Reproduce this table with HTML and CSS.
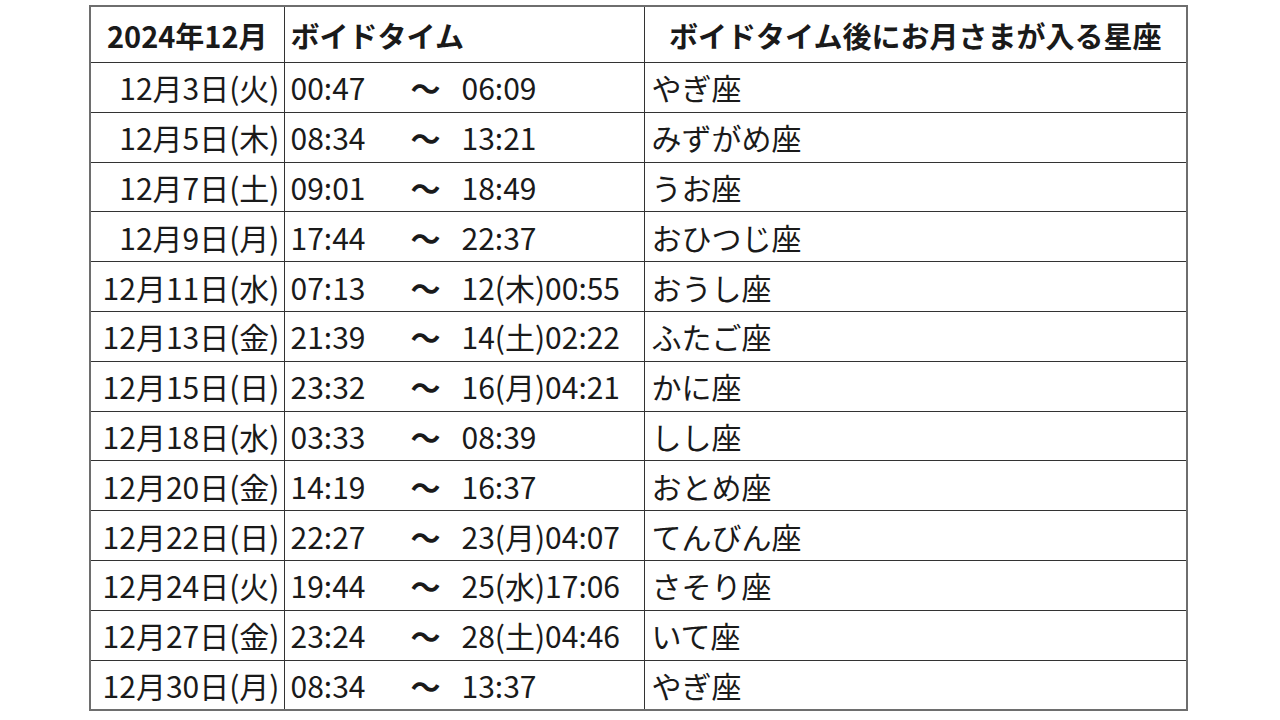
FILE: index.html
```
<!DOCTYPE html>
<html lang="ja">
<head>
<meta charset="utf-8">
<title>2024年12月 ボイドタイム</title>
<link rel="stylesheet" href="styles.css">
</head>
<body>
<table class="void">
  <colgroup>
    <col class="col-date">
    <col class="col-time">
    <col class="col-sign">
  </colgroup>
  <thead>
    <tr class="head">
      <th class="c-date">2024年12月</th>
      <th class="c-time">ボイドタイム</th>
      <th class="c-sign">ボイドタイム後にお月さまが入る星座</th>
    </tr>
  </thead>
  <tbody>
    <tr><td class="c-date">12月3日(火)</td><td class="c-time"><span class="t-start">00:47</span><span class="t-tilde">～</span><span class="t-end">06:09</span></td><td class="c-sign">やぎ座</td></tr>
    <tr><td class="c-date">12月5日(木)</td><td class="c-time"><span class="t-start">08:34</span><span class="t-tilde">～</span><span class="t-end">13:21</span></td><td class="c-sign">みずがめ座</td></tr>
    <tr><td class="c-date">12月7日(土)</td><td class="c-time"><span class="t-start">09:01</span><span class="t-tilde">～</span><span class="t-end">18:49</span></td><td class="c-sign">うお座</td></tr>
    <tr><td class="c-date">12月9日(月)</td><td class="c-time"><span class="t-start">17:44</span><span class="t-tilde">～</span><span class="t-end">22:37</span></td><td class="c-sign">おひつじ座</td></tr>
    <tr><td class="c-date">12月11日(水)</td><td class="c-time"><span class="t-start">07:13</span><span class="t-tilde">～</span><span class="t-end">12(木)00:55</span></td><td class="c-sign">おうし座</td></tr>
    <tr><td class="c-date">12月13日(金)</td><td class="c-time"><span class="t-start">21:39</span><span class="t-tilde">～</span><span class="t-end">14(土)02:22</span></td><td class="c-sign">ふたご座</td></tr>
    <tr><td class="c-date">12月15日(日)</td><td class="c-time"><span class="t-start">23:32</span><span class="t-tilde">～</span><span class="t-end">16(月)04:21</span></td><td class="c-sign">かに座</td></tr>
    <tr><td class="c-date">12月18日(水)</td><td class="c-time"><span class="t-start">03:33</span><span class="t-tilde">～</span><span class="t-end">08:39</span></td><td class="c-sign">しし座</td></tr>
    <tr><td class="c-date">12月20日(金)</td><td class="c-time"><span class="t-start">14:19</span><span class="t-tilde">～</span><span class="t-end">16:37</span></td><td class="c-sign">おとめ座</td></tr>
    <tr><td class="c-date">12月22日(日)</td><td class="c-time"><span class="t-start">22:27</span><span class="t-tilde">～</span><span class="t-end">23(月)04:07</span></td><td class="c-sign">てんびん座</td></tr>
    <tr><td class="c-date">12月24日(火)</td><td class="c-time"><span class="t-start">19:44</span><span class="t-tilde">～</span><span class="t-end">25(水)17:06</span></td><td class="c-sign">さそり座</td></tr>
    <tr><td class="c-date">12月27日(金)</td><td class="c-time"><span class="t-start">23:24</span><span class="t-tilde">～</span><span class="t-end">28(土)04:46</span></td><td class="c-sign">いて座</td></tr>
    <tr><td class="c-date">12月30日(月)</td><td class="c-time"><span class="t-start">08:34</span><span class="t-tilde">～</span><span class="t-end">13:37</span></td><td class="c-sign">やぎ座</td></tr>
  </tbody>
</table>
</body>
</html>
```
FILE: styles.css
```
html, body {
  margin: 0;
  padding: 0;
  background: #ffffff;
}

body {
  font-family: "Noto Sans CJK JP", "Noto Sans", sans-serif;
  color: #1a1a1a;
}

.void {
  margin: 5px 0 0 89px;
  width: 1099px;
  border-collapse: collapse;
  border: 2px solid #6e6e6e;
  table-layout: fixed;
}

.col-date {
  width: 194px;
}

.col-time {
  width: 360px;
}

.void th,
.void td {
  border: 1px solid #333333;
  padding: 0;
  vertical-align: middle;
  white-space: nowrap;
  line-height: 1;
}

.head th {
  height: 53px;
  font-size: 29px;
  font-weight: 700;
  padding-top: 2px;
}

.void td {
  height: 48.8px;
  font-size: 30px;
  font-weight: 400;
}

th.c-date {
  text-align: center;
}

th.c-time {
  text-align: left;
  padding-left: 6px;
}

th.c-sign {
  text-align: center;
}

td.c-date {
  text-align: right;
  padding-right: 4px;
}

td.c-time {
  padding-left: 6px;
}

td.c-sign {
  text-align: left;
  padding-left: 7px;
}

.t-start {
  display: inline-block;
  width: 120px;
}

.t-tilde {
  display: inline-block;
  width: 51px;
  font-weight: 700;
}

.t-end {
  display: inline-block;
}
```
